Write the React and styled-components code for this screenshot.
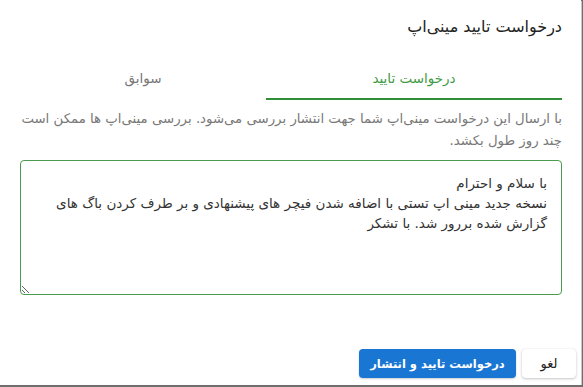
import React, { useEffect, useRef } from "react";
import styled, { createGlobalStyle } from "styled-components";

const Global = createGlobalStyle`
  html, body { margin: 0; padding: 0; background: #6e6e6e; }
  body { font-family: "DejaVu Sans", "Noto Sans", sans-serif; }
  * { box-sizing: border-box; }
`;

const Dialog = styled.div`
  direction: rtl;
  width: 581px;
  height: 385px;
  background: #fff;
  box-shadow: 1px 1px 0 #c8c8c8;
  display: flex;
  flex-direction: column;
  padding: 0 19px;
`;

const Title = styled.h2`
  margin: 0;
  padding-top: 15px;
  font-size: 16px;
  font-weight: normal;
  line-height: 24px;
  color: #222;
`;

const Tabs = styled.div`
  margin-top: 20px;
  display: grid;
  grid-template-columns: 296px 246px;
  height: 41px;
`;

const Tab = styled.div`
  display: flex;
  align-items: center;
  justify-content: center;
  font-size: 13.5px;
  color: ${(p) => (p.$active ? "#3f9a45" : "#777")};
  border-bottom: 2px solid ${(p) => (p.$active ? "#2f8f36" : "transparent")};
  padding-bottom: 1px;
`;

const Description = styled.p`
  margin: 8px 0 0;
  font-size: 13.3px;
  line-height: 22px;
  color: #787878;
`;

const Field = styled.textarea`
  margin-top: 8px;
  width: 542px;
  height: 135px;
  border: 1px solid #4a9a4f;
  border-radius: 4px;
  outline: none;
  padding: 12px 14px;
  font-family: "DejaVu Sans", "Noto Sans", sans-serif;
  font-size: 13.5px;
  line-height: 20px;
  color: #333;
  caret-color: #2f8f36;
  direction: rtl;
  resize: vertical;
`;

const Actions = styled.div`
  margin-top: auto;
  margin-right: -14px;
  margin-bottom: 7px;
  display: flex;
  gap: 6px;
`;

const Button = styled.button`
  height: 29px;
  border: none;
  border-radius: 4px;
  padding: 0;
  white-space: nowrap;
  font-family: "DejaVu Sans", "Noto Sans", sans-serif;
  font-size: ${(p) => (p.$primary ? "11.5px" : "13px")};
  cursor: pointer;
  background: ${(p) => (p.$primary ? "#1976d2" : "#fff")};
  color: ${(p) => (p.$primary ? "#fff" : "#222")};
  font-weight: ${(p) => (p.$primary ? "bold" : "normal")};
  box-shadow: ${(p) =>
    p.$primary
      ? "0 1px 2px rgba(0,0,0,0.2)"
      : "0 1px 3px rgba(0,0,0,0.22), 0 0 1px rgba(0,0,0,0.12)"};
  width: ${(p) => p.$w}px;
`;

const text =
  "با سلام و احترام\nنسخه جدید مینی اپ تستی با اضافه شدن فیچر های پیشنهادی و بر طرف کردن باگ های گزارش شده بررور شد. با تشکر";

export default function App() {
  const ref = useRef(null);
  useEffect(() => {
    const el = ref.current;
    if (el) {
      el.focus();
      el.setSelectionRange(text.length, text.length);
    }
  }, []);
  return (
    <>
      <Global />
      <Dialog>
        <Title>درخواست تایید مینی‌اپ</Title>
        <Tabs>
          <Tab $active>درخواست تایید</Tab>
          <Tab>سوابق</Tab>
        </Tabs>
        <Description>
          با ارسال این درخواست مینی‌اپ شما جهت انتشار بررسی می‌شود. بررسی
          مینی‌اپ ها ممکن است چند روز طول بکشد.
        </Description>
        <Field ref={ref} defaultValue={text} />
        <Actions>
          <Button $w={54}>لغو</Button>
          <Button $primary $w={157}>
            درخواست تایید و انتشار
          </Button>
        </Actions>
      </Dialog>
    </>
  );
}
